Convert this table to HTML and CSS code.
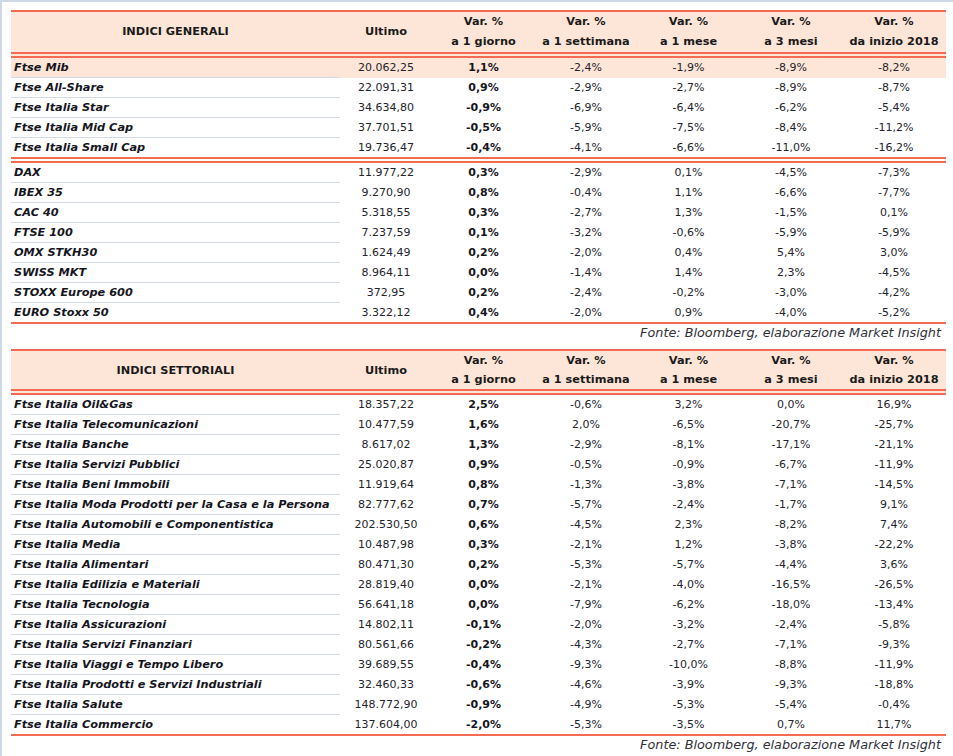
FILE: index.html
```html
<!DOCTYPE html>
<html lang="it">
<head>
<meta charset="utf-8">
<title>Indici</title>
<link rel="stylesheet" href="styles.css">
</head>
<body>
<table class="t">
  <colgroup>
    <col class="c-name"><col class="c-last"><col class="c-v1"><col class="c-v2"><col class="c-v3"><col class="c-v4"><col class="c-v5">
  </colgroup>
  <thead>
    <tr>
      <th>INDICI GENERALI</th><th>Ultimo</th><th>Var. %<br>a 1 giorno</th><th>Var. %<br>a 1 settimana</th><th>Var. %<br>a 1 mese</th><th>Var. %<br>a 3 mesi</th><th>Var. %<br>da inizio 2018</th>
    </tr>
  </thead>
  <tbody>
    <tr class="hl"><td class="n">Ftse Mib</td><td>20.062,25</td><td class="b">1,1%</td><td>-2,4%</td><td>-1,9%</td><td>-8,9%</td><td>-8,2%</td></tr>
    <tr><td class="n">Ftse All-Share</td><td>22.091,31</td><td class="b">0,9%</td><td>-2,9%</td><td>-2,7%</td><td>-8,9%</td><td>-8,7%</td></tr>
    <tr><td class="n">Ftse Italia Star</td><td>34.634,80</td><td class="b">-0,9%</td><td>-6,9%</td><td>-6,4%</td><td>-6,2%</td><td>-5,4%</td></tr>
    <tr><td class="n">Ftse Italia Mid Cap</td><td>37.701,51</td><td class="b">-0,5%</td><td>-5,9%</td><td>-7,5%</td><td>-8,4%</td><td>-11,2%</td></tr>
    <tr class="end"><td class="n">Ftse Italia Small Cap</td><td>19.736,47</td><td class="b">-0,4%</td><td>-4,1%</td><td>-6,6%</td><td>-11,0%</td><td>-16,2%</td></tr>
    <tr><td class="n">DAX</td><td>11.977,22</td><td class="b">0,3%</td><td>-2,9%</td><td>0,1%</td><td>-4,5%</td><td>-7,3%</td></tr>
    <tr><td class="n">IBEX 35</td><td>9.270,90</td><td class="b">0,8%</td><td>-0,4%</td><td>1,1%</td><td>-6,6%</td><td>-7,7%</td></tr>
    <tr><td class="n">CAC 40</td><td>5.318,55</td><td class="b">0,3%</td><td>-2,7%</td><td>1,3%</td><td>-1,5%</td><td>0,1%</td></tr>
    <tr><td class="n">FTSE 100</td><td>7.237,59</td><td class="b">0,1%</td><td>-3,2%</td><td>-0,6%</td><td>-5,9%</td><td>-5,9%</td></tr>
    <tr><td class="n">OMX STKH30</td><td>1.624,49</td><td class="b">0,2%</td><td>-2,0%</td><td>0,4%</td><td>5,4%</td><td>3,0%</td></tr>
    <tr><td class="n">SWISS MKT</td><td>8.964,11</td><td class="b">0,0%</td><td>-1,4%</td><td>1,4%</td><td>2,3%</td><td>-4,5%</td></tr>
    <tr><td class="n">STOXX Europe 600</td><td>372,95</td><td class="b">0,2%</td><td>-2,4%</td><td>-0,2%</td><td>-3,0%</td><td>-4,2%</td></tr>
    <tr class="last"><td class="n">EURO Stoxx 50</td><td>3.322,12</td><td class="b">0,4%</td><td>-2,0%</td><td>0,9%</td><td>-4,0%</td><td>-5,2%</td></tr>
  </tbody>
</table>
<p class="src">Fonte: Bloomberg, elaborazione Market Insight</p>

<table class="t t2">
  <colgroup>
    <col class="c-name"><col class="c-last"><col class="c-v1"><col class="c-v2"><col class="c-v3"><col class="c-v4"><col class="c-v5">
  </colgroup>
  <thead>
    <tr>
      <th>INDICI SETTORIALI</th><th>Ultimo</th><th>Var. %<br>a 1 giorno</th><th>Var. %<br>a 1 settimana</th><th>Var. %<br>a 1 mese</th><th>Var. %<br>a 3 mesi</th><th>Var. %<br>da inizio 2018</th>
    </tr>
  </thead>
  <tbody>
    <tr><td class="n">Ftse Italia Oil&amp;Gas</td><td>18.357,22</td><td class="b">2,5%</td><td>-0,6%</td><td>3,2%</td><td>0,0%</td><td>16,9%</td></tr>
    <tr><td class="n">Ftse Italia Telecomunicazioni</td><td>10.477,59</td><td class="b">1,6%</td><td>2,0%</td><td>-6,5%</td><td>-20,7%</td><td>-25,7%</td></tr>
    <tr><td class="n">Ftse Italia Banche</td><td>8.617,02</td><td class="b">1,3%</td><td>-2,9%</td><td>-8,1%</td><td>-17,1%</td><td>-21,1%</td></tr>
    <tr><td class="n">Ftse Italia Servizi Pubblici</td><td>25.020,87</td><td class="b">0,9%</td><td>-0,5%</td><td>-0,9%</td><td>-6,7%</td><td>-11,9%</td></tr>
    <tr><td class="n">Ftse Italia Beni Immobili</td><td>11.919,64</td><td class="b">0,8%</td><td>-1,3%</td><td>-3,8%</td><td>-7,1%</td><td>-14,5%</td></tr>
    <tr><td class="n">Ftse Italia Moda Prodotti per la Casa e la Persona</td><td>82.777,62</td><td class="b">0,7%</td><td>-5,7%</td><td>-2,4%</td><td>-1,7%</td><td>9,1%</td></tr>
    <tr><td class="n">Ftse Italia Automobili e Componentistica</td><td>202.530,50</td><td class="b">0,6%</td><td>-4,5%</td><td>2,3%</td><td>-8,2%</td><td>7,4%</td></tr>
    <tr><td class="n">Ftse Italia Media</td><td>10.487,98</td><td class="b">0,3%</td><td>-2,1%</td><td>1,2%</td><td>-3,8%</td><td>-22,2%</td></tr>
    <tr><td class="n">Ftse Italia Alimentari</td><td>80.471,30</td><td class="b">0,2%</td><td>-5,3%</td><td>-5,7%</td><td>-4,4%</td><td>3,6%</td></tr>
    <tr><td class="n">Ftse Italia Edilizia e Materiali</td><td>28.819,40</td><td class="b">0,0%</td><td>-2,1%</td><td>-4,0%</td><td>-16,5%</td><td>-26,5%</td></tr>
    <tr><td class="n">Ftse Italia Tecnologia</td><td>56.641,18</td><td class="b">0,0%</td><td>-7,9%</td><td>-6,2%</td><td>-18,0%</td><td>-13,4%</td></tr>
    <tr><td class="n">Ftse Italia Assicurazioni</td><td>14.802,11</td><td class="b">-0,1%</td><td>-2,0%</td><td>-3,2%</td><td>-2,4%</td><td>-5,8%</td></tr>
    <tr><td class="n">Ftse Italia Servizi Finanziari</td><td>80.561,66</td><td class="b">-0,2%</td><td>-4,3%</td><td>-2,7%</td><td>-7,1%</td><td>-9,3%</td></tr>
    <tr><td class="n">Ftse Italia Viaggi e Tempo Libero</td><td>39.689,55</td><td class="b">-0,4%</td><td>-9,3%</td><td>-10,0%</td><td>-8,8%</td><td>-11,9%</td></tr>
    <tr><td class="n">Ftse Italia Prodotti e Servizi Industriali</td><td>32.460,33</td><td class="b">-0,6%</td><td>-4,6%</td><td>-3,9%</td><td>-9,3%</td><td>-18,8%</td></tr>
    <tr><td class="n">Ftse Italia Salute</td><td>148.772,90</td><td class="b">-0,9%</td><td>-4,9%</td><td>-5,3%</td><td>-5,4%</td><td>-0,4%</td></tr>
    <tr class="last"><td class="n">Ftse Italia Commercio</td><td>137.604,00</td><td class="b">-2,0%</td><td>-5,3%</td><td>-3,5%</td><td>0,7%</td><td>11,7%</td></tr>
  </tbody>
</table>
<p class="src">Fonte: Bloomberg, elaborazione Market Insight</p>
</body>
</html>
```

FILE: styles.css
```css
html {
  height: 100%;
}

body {
  margin: 0;
  min-height: 100%;
  box-sizing: border-box;
  border-top: 2px solid #cfd8e6;
  border-left: 2px solid #cfd8e6;
  padding: 8px 0 0 9px;
  background: #ffffff;
  font-family: "DejaVu Sans", "Liberation Sans", sans-serif;
  color: #1c1c24;
}

.t {
  border-collapse: separate;
  border-spacing: 0;
  width: 935px;
  table-layout: fixed;
}

.c-name { width: 329px; }
.c-last { width: 92px; }
.c-v1 { width: 103px; }
.c-v2 { width: 102px; }
.c-v3 { width: 103px; }
.c-v4 { width: 102px; }
.c-v5 { width: 104px; }

.t th {
  padding: 0;
  font-size: 11.3px;
  font-weight: bold;
  line-height: 20px;
  color: #1a1a1a;
  background: #fde6d7;
  border-top: 2px solid #f26b52;
  border-bottom: 6px double #f26b52;
  text-align: center;
  vertical-align: middle;
  white-space: nowrap;
}

.t2 th {
  line-height: 19px;
}

.t td {
  padding: 0;
  font-size: 11px;
  line-height: 19px;
  color: #23232b;
  text-align: center;
  white-space: nowrap;
  border-bottom: 1px solid transparent;
}

.t td.n {
  text-align: left;
  padding-left: 3px;
  font-size: 11.3px;
  font-weight: bold;
  font-style: italic;
  color: #15151d;
  border-bottom-color: #d3dae6;
}

.t td.b {
  font-weight: bold;
  color: #15151d;
}

.t tr.hl td {
  background: #fde6d7;
}

.t tr.end td {
  border-bottom: 6px double #f26b52;
}

.t tr.last td {
  border-bottom: 2px solid #f26b52;
}

.src {
  margin: 0 0 7px 0;
  width: 930px;
  text-align: right;
  font-size: 12.8px;
  font-style: italic;
  line-height: 18px;
  color: #303038;
}
```
